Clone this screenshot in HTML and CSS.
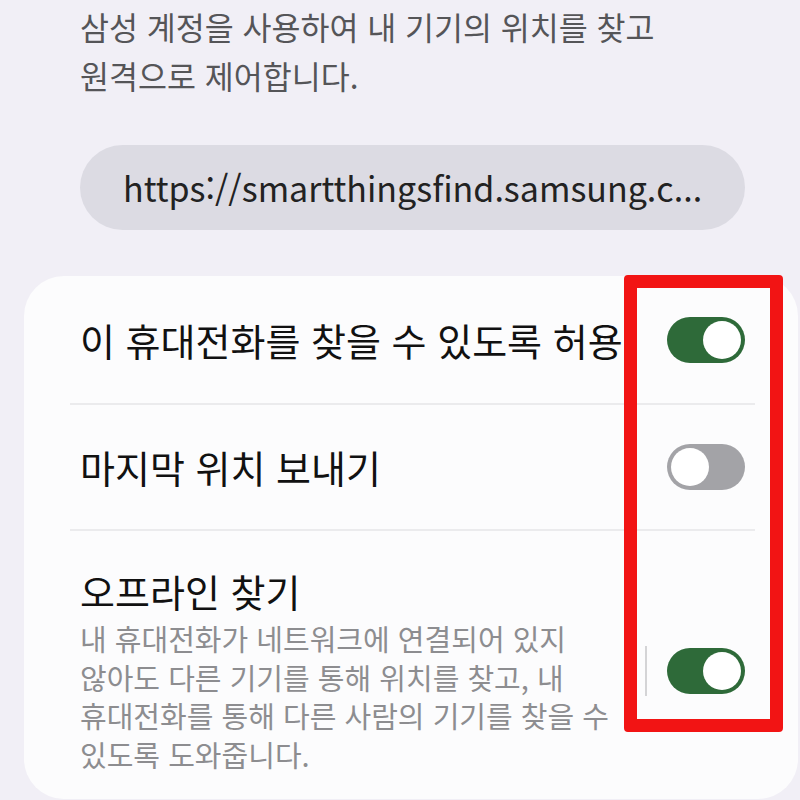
FILE: index.html
```html
<!DOCTYPE html>
<html lang="ko">
<head>
<meta charset="utf-8">
<link rel="stylesheet" href="styles.css">
</head>
<body>
<div class="page">
  <p class="desc">삼성 계정을 사용하여 내 기기의 위치를 찾고<br>원격으로 제어합니다.</p>
  <div class="url">https://smartthingsfind.samsung.c...</div>
  <div class="card">
    <div class="row row-first">
      <div class="row-text"><div class="title">이 휴대전화를 찾을 수 있도록 허용</div></div>
      <div class="switch on"><span class="knob"></span></div>
    </div>
    <div class="divider"></div>
    <div class="row row-mid">
      <div class="row-text"><div class="title">마지막 위치 보내기</div></div>
      <div class="switch off"><span class="knob"></span></div>
    </div>
    <div class="divider"></div>
    <div class="row row-last">
      <div class="row-text">
        <div class="title">오프라인 찾기</div>
        <div class="sub">내 휴대전화가 네트워크에 연결되어 있지<br>않아도 다른 기기를 통해 위치를 찾고, 내<br>휴대전화를 통해 다른 사람의 기기를 찾을 수<br>있도록 도와줍니다.</div>
      </div>
      <div class="vsep"></div>
      <div class="switch on"><span class="knob"></span></div>
    </div>
  </div>
  <div class="highlight"></div>
</div>
</body>
</html>
```
FILE: styles.css
```css
* { box-sizing: border-box; }
html, body { margin: 0; padding: 0; }
body {
  background: #f1eff6;
  font-family: "Noto Sans CJK KR", "Noto Sans", sans-serif;
  width: 800px;
  height: 800px;
  overflow: hidden;
}
.page {
  position: relative;
  width: 800px;
  height: 800px;
  padding-top: 2px;
}
.desc {
  margin: 0 0 0 80px;
  font-size: 31.5px;
  line-height: 49px;
  color: #555558;
}
.url {
  margin: 45px 0 0 80px;
  width: 665px;
  height: 85px;
  border-radius: 43px;
  background: #dcdbe3;
  color: #222;
  font-size: 34px;
  line-height: 85px;
  padding-left: 43px;
  white-space: nowrap;
  overflow: hidden;
}
.card {
  margin: 46px 0 0 24px;
  width: 774px;
  height: 523px;
  background: #fcfcfd;
  border-radius: 40px;
  padding: 0 53px 0 56px;
}
.row {
  display: flex;
  align-items: center;
}
.row-first { height: 127px; }
.row-mid { height: 124px; }
.row-last { padding: 37px 0 20px; }
.row-text { flex: 1; min-width: 0; }
.title {
  font-size: 38px;
  line-height: 46px;
  color: #111;
  white-space: nowrap;
}
.sub {
  margin-top: 5px;
  font-size: 29px;
  line-height: 38.5px;
  color: #8d8d90;
}
.divider {
  height: 2px;
  background: #ebebed;
  margin: 0 -10px 0 -10px;
}
.vsep {
  width: 2px;
  height: 50px;
  background: #d4d4d6;
  margin: 0 20px 0 14px;
}
.switch {
  position: relative;
  flex: none;
  width: 78px;
  height: 46px;
  border-radius: 23px;
  margin-left: 40px;
}
.row-first .row-text { overflow: visible; }
.row-first .switch { margin-left: 0; }
.row-last .switch { margin-left: 0; }
.switch.on { background: #2e6a39; }
.switch.off { background: #a3a3a7; }
.knob {
  position: absolute;
  top: 4px;
  width: 38px;
  height: 38px;
  border-radius: 50%;
  background: #fff;
}
.switch.on .knob { right: 4px; }
.switch.off .knob { left: 4px; }
.highlight {
  position: absolute;
  left: 624px;
  top: 275px;
  width: 159px;
  height: 457px;
  border: 13px solid #f21414;
  border-radius: 4px;
}
```
